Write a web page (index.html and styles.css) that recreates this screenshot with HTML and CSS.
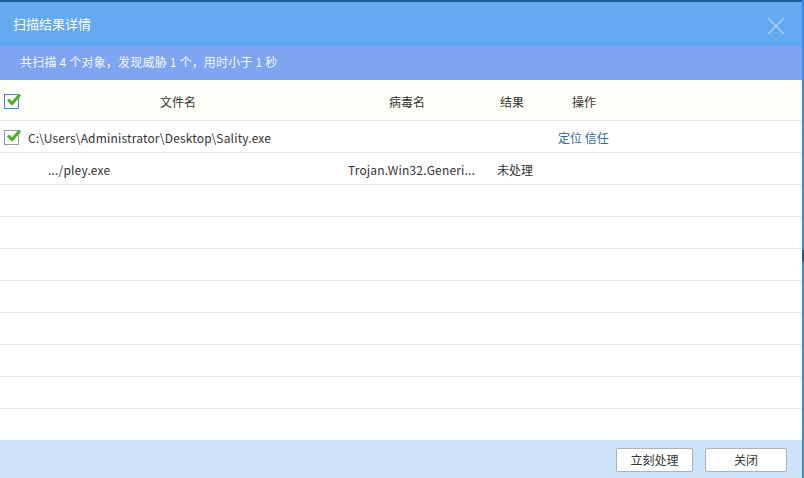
FILE: index.html
```html
<!DOCTYPE html>
<html lang="zh-CN">
<head>
<meta charset="utf-8">
<link rel="stylesheet" href="styles.css">
</head>
<body>
<div class="screen">
  <div class="dialog">
    <div class="topline"></div>
    <div class="titlebar">
      <span class="title">扫描结果详情</span>
      <svg class="close" width="18" height="18" viewBox="0 0 18 18"><path d="M1 1L17 17M17 1L1 17" stroke="#a9cdf4" stroke-width="1.6" fill="none"/></svg>
    </div>
    <div class="summary">共扫描 4 个对象，发现威胁 1 个，用时小于 1 秒</div>
    <div class="table">
      <div class="row head">
        <div class="c-chk"><span class="chk blue"><svg width="15" height="13" viewBox="0 0 15 13"><path d="M2 6.5L6 10.5L14 1.5" stroke="#4cae2c" stroke-width="3" fill="none"/></svg></span></div>
        <div class="c-file center">文件名</div>
        <div class="c-virus">病毒名</div>
        <div class="c-res">结果</div>
        <div class="c-op">操作</div>
      </div>
      <div class="row">
        <div class="c-chk"><span class="chk gray"><svg width="15" height="13" viewBox="0 0 15 13"><path d="M2 6.5L6 10.5L14 1.5" stroke="#4cae2c" stroke-width="3" fill="none"/></svg></span></div>
        <div class="c-file latin">C:\Users\Administrator\Desktop\Sality.exe</div>
        <div class="c-virus"></div>
        <div class="c-res"></div>
        <div class="c-op link">定位 信任</div>
      </div>
      <div class="row">
        <div class="c-chk"></div>
        <div class="c-file sub latin">.../pley.exe</div>
        <div class="c-virus latin">Trojan.Win32.Generi...</div>
        <div class="c-res">未处理</div>
        <div class="c-op"></div>
      </div>
      <div class="row"></div>
      <div class="row"></div>
      <div class="row"></div>
      <div class="row"></div>
      <div class="row"></div>
      <div class="row"></div>
      <div class="row"></div>
      <div class="rest"></div>
    </div>
    <div class="footer">
      <button class="btn btn1">立刻处理</button>
      <button class="btn btn2">关闭</button>
    </div>
  </div>
  <div class="edge"><div class="edge-mark"></div></div>
</div>
</body>
</html>
```
FILE: styles.css
```css
html, body { margin: 0; padding: 0; }
body {
  width: 804px; height: 478px; overflow: hidden;
  font-family: "Noto Sans CJK SC", "Noto Sans", sans-serif;
  font-size: 12px; color: #333;
}
.screen { display: flex; width: 804px; height: 478px; }
.dialog { width: 802px; height: 478px; display: flex; flex-direction: column; background: #fff; }
.edge { width: 2px; background: #3a8fdc; display: flex; flex-direction: column; }
.edge-mark { margin-top: 250px; height: 12px; background: #1d5b95; }
.topline { height: 2px; background: #1f5e9e; }
.titlebar {
  height: 44px; background: #63a9ef; display: flex; align-items: center;
  justify-content: space-between; padding: 0 17px 0 13px;
}
.title { color: #fff; font-size: 13px; margin-top: -1px; }
.close { margin-top: 4px; }
.summary {
  height: 34px; background: #7ea5f1; color: #f4f7ff; display: flex; align-items: center;
  padding-left: 20px; font-size: 12px; padding-bottom: 3px; box-sizing: border-box;
  letter-spacing: 0.2px;
}
.table { flex: 1; display: flex; flex-direction: column; }
.row {
  height: 29px; padding-top: 2px; border-bottom: 1px solid #e9e9e9; display: flex; align-items: center;
}
.row.head { height: 38px; padding-top: 2px; background: #fefef8; }
.rest { flex: 1; background: #fffffd; }
.c-chk { width: 28px; display: flex; align-items: center; padding-left: 4px; box-sizing: border-box; }
.chk { width: 13px; height: 13px; border: 1px solid #9a9a9a; position: relative; background: #fff; }
.chk.blue { border-color: #2f8ad3; }
.chk svg { position: absolute; left: 1px; top: -2px; }
.latin { letter-spacing: 0.17px; }
.c-file { width: 300px; white-space: nowrap; }
.c-file.center { text-align: center; }
.c-file.sub { padding-left: 20px; box-sizing: border-box; }
.c-virus { width: 168px; padding-left: 20px; box-sizing: border-box; white-space: nowrap; }
.head .c-virus { padding-left: 61px; }
.c-res { width: 61px; padding-left: 1px; box-sizing: border-box; }
.head .c-res { padding-left: 4px; }
.c-op { width: 120px; padding-left: 1px; }
.head .c-op { padding-left: 15px; }
.link { color: #2b6aa6; }
.footer {
  height: 38px; background: #cce3f9; display: flex; align-items: center;
  justify-content: flex-end; padding-right: 15px; gap: 12px; box-sizing: border-box;
}
.btn {
  height: 24px; border: 1px solid #a9b2bc; background: #fff; border-radius: 2px;
  font-family: inherit; font-size: 12px; color: #333; padding: 0; margin-top: 1px;
}
.btn1 { width: 77px; }
.btn2 { width: 82px; }
```
